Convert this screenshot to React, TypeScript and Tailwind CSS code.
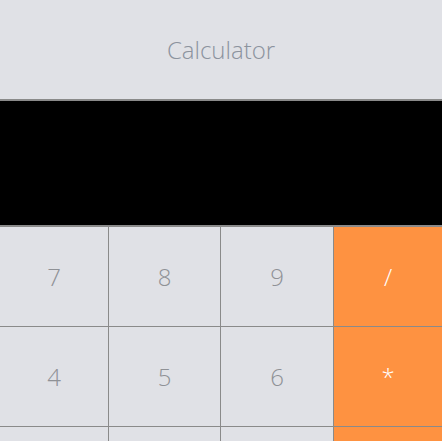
import React from "react";

const KEYS: { label: string; op?: boolean }[] = [
  { label: "7" },
  { label: "8" },
  { label: "9" },
  { label: "/", op: true },
  { label: "4" },
  { label: "5" },
  { label: "6" },
  { label: "*", op: true },
  { label: "1" },
  { label: "2" },
  { label: "3" },
  { label: "-", op: true },
  { label: "0" },
  { label: "." },
  { label: "=" },
  { label: "+", op: true },
];

export default function App() {
  return (
    <div
      className="w-full min-h-screen bg-[#e0e1e6]"
      style={{ fontFamily: '"Open Sans", "Liberation Sans", sans-serif' }}
    >
      {/* Header */}
      <div className="h-[101px] flex items-center justify-center border-b-2 border-[#8a8a8a]">
        <h1 className="text-[24px] font-light text-[#8c939e] leading-none mt-[1px]">
          Calculator
        </h1>
      </div>

      {/* Display */}
      <div className="h-[126px] bg-black border-b-2 border-[#8a8a8a]" />

      {/* Keypad */}
      <div className="grid grid-cols-[108px_111px_112px_1fr] gap-px bg-[#8a8a8a] pb-px">
        {KEYS.map((k) => (
          <button
            key={k.label}
            className={`h-[99px] flex items-center justify-center text-[24px] font-light ${
              k.op ? "bg-[#fe9241] text-white" : "bg-[#e0e1e6] text-[#8f9196]"
            }`}
          >
            {k.label}
          </button>
        ))}
      </div>
    </div>
  );
}
